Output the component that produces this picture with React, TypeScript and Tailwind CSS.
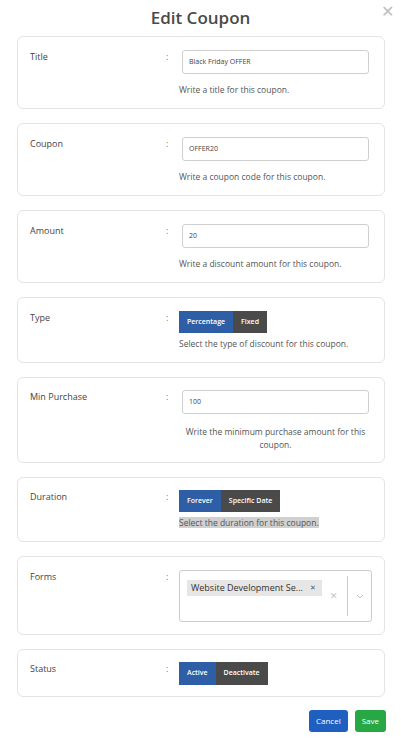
import { ReactNode } from 'react'

interface IFieldRowProps {
   label: string
   children: ReactNode
   className?: string
}

function FieldRow({ label, children, className = '' }: IFieldRowProps) {
   return (
      <div className={`flex rounded-md border border-[#e4e4e4] bg-white pl-[12px] pr-[12px] ${className}`}>
         <div className="w-[136px] shrink-0 pt-[1px] text-[9px] leading-[12px] text-[#444]">{label}</div>
         <div className="w-[13px] shrink-0 pt-[1px] text-[9px] leading-[12px] text-[#777]">:</div>
         <div className="flex-1">{children}</div>
      </div>
   )
}

function TextInput({ value }: { value: string }) {
   return (
      <div className="mx-[3px] flex h-[24px] items-center rounded-[3px] border border-[#cfcfcf] px-[6px] text-[7px] text-[#444]">
         {value}
      </div>
   )
}

function Helper({ children, className = '' }: { children: ReactNode; className?: string }) {
   return <p className={`text-[8.5px] leading-[12px] text-[#555] ${className}`}>{children}</p>
}

interface ISegmentProps {
   options: string[]
   active: number
   height?: string
}

function Segmented({ options, active, height = 'h-[22px]' }: ISegmentProps) {
   return (
      <div className="flex">
         {options.map((opt, i) => (
            <span
               key={opt}
               className={`flex ${height} items-center px-[8px] text-[7px] font-semibold text-white ${
                  i === active ? 'bg-[#2e5ea5]' : 'bg-[#4a4a4a]'
               }`}
            >
               {opt}
            </span>
         ))}
      </div>
   )
}

export default function App() {
   return (
      <div
         className="h-[746px] w-[401px] bg-white"
         style={{ fontFamily: '"Open Sans", "Noto Sans", sans-serif' }}
      >
         <div className="relative flex h-[36px] items-center justify-center">
            <h2 className="text-[17px] font-semibold text-[#4a4a4a]">Edit Coupon</h2>
            <span className="absolute right-[7px] top-[3px] text-[16px] leading-none text-[#bdbdbd]">✕</span>
         </div>

         <div className="flex flex-col gap-[14px] px-[17px] pr-[16px]">
            <FieldRow label="Title" className="pt-[13px] pb-[12px]">
               <TextInput value="Black Friday OFFER" />
               <Helper className="mt-[10px]">Write a title for this coupon.</Helper>
            </FieldRow>

            <FieldRow label="Coupon" className="pt-[13px] pb-[12px]">
               <TextInput value="OFFER20" />
               <Helper className="mt-[10px]">Write a coupon code for this coupon.</Helper>
            </FieldRow>

            <FieldRow label="Amount" className="pt-[13px] pb-[12px]">
               <TextInput value="20" />
               <Helper className="mt-[10px]">Write a discount amount for this coupon.</Helper>
            </FieldRow>

            <FieldRow label="Type" className="pt-[13px] pb-[12px]">
               <Segmented options={['Percentage', 'Fixed']} active={0} />
               <Helper className="mt-[5px]">Select the type of discount for this coupon.</Helper>
            </FieldRow>

            <FieldRow label="Min Purchase" className="pt-[12px] pb-[11px]">
               <TextInput value="100" />
               <Helper className="mt-[11px] text-center leading-[13px]">
                  Write the minimum purchase amount for this coupon.
               </Helper>
            </FieldRow>

            <FieldRow label="Duration" className="pt-[12px] pb-[12px]">
               <Segmented options={['Forever', 'Specific Date']} active={0} />
               <Helper className="mt-[5px]">
                  <span className="bg-[#d0d0d0]">Select the duration for this coupon.</span>
               </Helper>
            </FieldRow>

            <FieldRow label="Forms" className="pt-[13px] pb-[12px]">
               <div className="flex h-[52px] rounded-[3px] border border-[#cccccc]">
                  <div className="flex-1 pl-[7px] pt-[2px]">
                     <span className="inline-flex h-[16px] items-center gap-[7px] bg-[#e6e6e6] pl-[4px] pr-[6px] text-[9px] text-[#333]">
                        Website Development Se...
                        <span className="text-[7px] text-[#555]">✕</span>
                     </span>
                  </div>
                  <div className="flex items-center pr-[9px] text-[9px] text-[#c4c4c4]">✕</div>
                  <div className="my-[5px] w-px bg-[#cccccc]" />
                  <div className="flex w-[23px] items-center justify-center">
                     <svg width="8" height="5" viewBox="0 0 8 5" fill="none">
                        <path d="M1 1l3 3 3-3" stroke="#c4c4c4" strokeWidth="1" />
                     </svg>
                  </div>
               </div>
            </FieldRow>

            <FieldRow label="Status" className="pt-[12px] pb-[11px]">
               <Segmented options={['Active', 'Deactivate']} active={0} height="h-[23px]" />
            </FieldRow>
         </div>

         <div className="mt-[13px] flex justify-end gap-[7px] pr-[15px]">
            <button className="h-[22px] rounded-[3px] bg-[#1f5fbf] px-[7px] text-[8px] text-white">Cancel</button>
            <button className="h-[22px] rounded-[3px] bg-[#28a745] px-[7px] text-[8px] text-white">Save</button>
         </div>
      </div>
   )
}
